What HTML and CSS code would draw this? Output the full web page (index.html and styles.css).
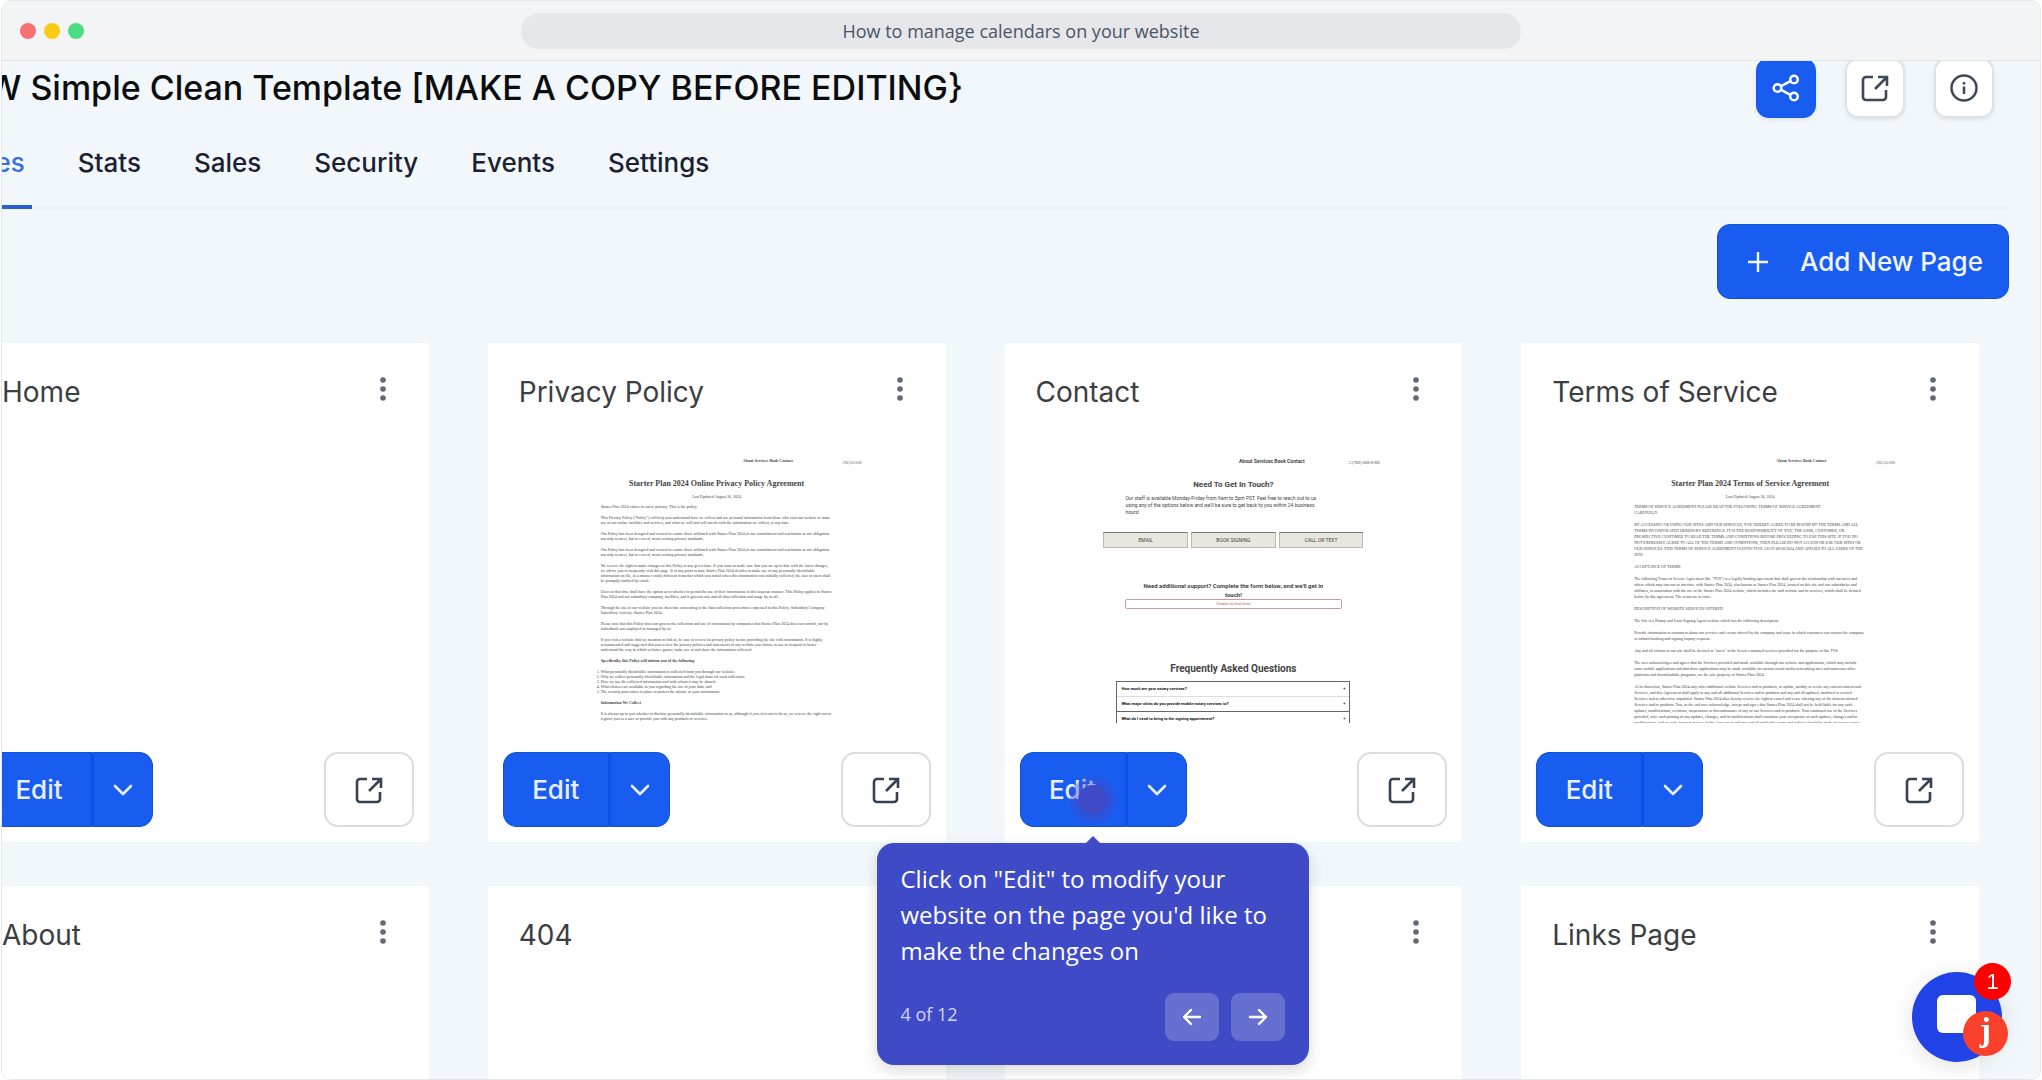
FILE: index.html
```
<!DOCTYPE html>
<html lang="en">
<head>
    <meta charset="UTF-8">
    <meta name="viewport" content="width=device-width, initial-scale=1.0">
    <title>How to manage calendars on your website</title>
    <link rel="stylesheet" href="styles.css">
</head>
<body>

    <!-- Shared icons -->
    <svg class="sprite" aria-hidden="true">
        <symbol id="icon-external" viewBox="0 0 28 28">
            <path d="M12 3H5a3 3 0 0 0-3 3v17a3 3 0 0 0 3 3h17a3 3 0 0 0 3-3v-7M17 3h9v9M25.500 3.500L14 15" fill="none" stroke="currentColor" stroke-width="2.600"/>
        </symbol>
        <symbol id="icon-chevron" viewBox="0 0 20 12">
            <path d="M2 2l8 8 8-8" fill="none" stroke="currentColor" stroke-width="2.600" stroke-linecap="round" stroke-linejoin="round"/>
        </symbol>
        <symbol id="icon-dots" viewBox="0 0 6 24">
            <circle cx="3" cy="3" r="2.800"/><circle cx="3" cy="12" r="2.800"/><circle cx="3" cy="21" r="2.800"/>
        </symbol>
    </svg>

    <div class="window">
        <div class="title-bar">
            <div class="lights">
                <span class="light red"></span>
                <span class="light yellow"></span>
                <span class="light green"></span>
            </div>
            <div class="address">How to manage calendars on your website</div>
        </div>

        <div class="viewport">
            <div class="workspace">
                <header class="site-header">
                    <h1>NEW Simple Clean Template [MAKE A COPY BEFORE EDITING}</h1>
                    <div class="actions">
                        <button class="icon-button primary" aria-label="Share">
                            <svg width="28" height="28" viewBox="0 0 28 28" fill="none" stroke="currentColor" stroke-width="2.500">
                                <circle cx="5.500" cy="14" r="3.800"/><circle cx="22" cy="5.500" r="3.800"/><circle cx="22" cy="22.500" r="3.800"/>
                                <path d="M9 12.200l9.500-5M9 15.800l9.500 5"/>
                            </svg>
                        </button>
                        <button class="icon-button" aria-label="Open site"><svg width="28" height="28"><use href="#icon-external"/></svg></button>
                        <button class="icon-button" aria-label="Info">
                            <svg width="28" height="28" viewBox="0 0 28 28" fill="none" stroke="currentColor" stroke-width="2.500">
                                <circle cx="14" cy="14" r="12.500"/>
                                <path d="M14 12.500v7.500M14 8v2.500"/>
                            </svg>
                        </button>
                    </div>
                </header>

                <nav class="tabs">
                    <a href="#" class="active">Pages</a>
                    <a href="#">Stats</a>
                    <a href="#">Sales</a>
                    <a href="#">Security</a>
                    <a href="#">Events</a>
                    <a href="#">Settings</a>
                </nav>

                <div class="toolbar">
                    <button class="add-button">
                        <svg width="20" height="20" viewBox="0 0 20 20"><path d="M10 0v20M0 10h20" stroke="currentColor" stroke-width="2.400"/></svg>
                        Add New Page
                    </button>
                </div>

                <div class="cards">
                    <section class="card">
                        <div class="card-head">
                            <h2>Home</h2>
                            <button class="dots" aria-label="More"><svg width="6" height="24"><use href="#icon-dots"/></svg></button>
                        </div>
                        <div class="thumb"></div>
                        <div class="card-foot">
                            <div class="split">
                                <button class="edit">Edit</button>
                                <button class="more" aria-label="Edit options"><svg width="20" height="12"><use href="#icon-chevron"/></svg></button>
                            </div>
                            <button class="open" aria-label="Open page"><svg width="28" height="28"><use href="#icon-external"/></svg></button>
                        </div>
                    </section>

                    <section class="card">
                        <div class="card-head">
                            <h2>Privacy Policy</h2>
                            <button class="dots" aria-label="More"><svg width="6" height="24"><use href="#icon-dots"/></svg></button>
                        </div>
                        <div class="thumb doc">
                            <div class="doc-nav"><b>About Services Book Contact</b><span>(702) 555-0100</span></div>
                            <h3>Starter Plan 2024 Online Privacy Policy Agreement</h3>
                            <p class="date">Last Updated August 30, 2024</p>
                            <div class="doc-body">
                                <p>Starter Plan 2024 values its users' privacy. This is the policy.</p>
                                <p>This Privacy Policy ("Policy") will help you understand how we collect and use personal information from those who visit our website or make use of our online facilities and services, and what we will and will not do with the information we collect, at any time.</p>
                                <p>Our Policy has been designed and created to ensure those affiliated with Starter Plan 2024 of our commitment and realization of our obligation not only to meet, but to exceed, most existing privacy standards.</p>
                                <p>Our Policy has been designed and created to ensure those affiliated with Starter Plan 2024 of our commitment and realization of our obligation not only to meet, but to exceed, most existing privacy standards.</p>
                                <p>We reserve the right to make changes to this Policy at any given time. If you want to make sure that you are up to date with the latest changes, we advise you to frequently visit this page. If at any point in time Starter Plan 2024 decides to make use of any personally identifiable information on file, in a manner vastly different from that which was stated when this information was initially collected, the user or users shall be promptly notified by email.</p>
                                <p>Users at that time shall have the option as to whether to permit the use of their information in this separate manner. This Policy applies to Starter Plan 2024 and our subsidiary company, facilities, and it governs any and all data collection and usage by us all.</p>
                                <p>Through the use of our website you are therefore consenting to the data collection procedures expressed in this Policy. Subsidiary Company Subsidiary Activity: Starter Plan 2024.</p>
                                <p>Please note that this Policy does not govern the collection and use of information by companies that Starter Plan 2024 does not control, nor by individuals not employed or managed by us.</p>
                                <p>If you visit a website that we mention or link to, be sure to review its privacy policy before providing the site with information. It is highly recommended and suggested that you review the privacy policies and statements of any website you choose to use or frequent to better understand the way in which websites garner, make use of and share the information collected.</p>
                                <p><b>Specifically, this Policy will inform you of the following</b></p>
                                <ol>
                                    <li>What personally identifiable information is collected from you through our website;</li>
                                    <li>Why we collect personally identifiable information and the legal basis for such collection;</li>
                                    <li>How we use the collected information and with whom it may be shared;</li>
                                    <li>What choices are available to you regarding the use of your data; and</li>
                                    <li>The security procedures in place to protect the misuse of your information.</li>
                                </ol>
                                <p><b>Information We Collect</b></p>
                                <p>It is always up to you whether to disclose personally identifiable information to us, although if you elect not to do so, we reserve the right not to register you as a user or provide you with any products or services.</p>
                            </div>
                        </div>
                        <div class="card-foot">
                            <div class="split">
                                <button class="edit">Edit</button>
                                <button class="more" aria-label="Edit options"><svg width="20" height="12"><use href="#icon-chevron"/></svg></button>
                            </div>
                            <button class="open" aria-label="Open page"><svg width="28" height="28"><use href="#icon-external"/></svg></button>
                        </div>
                    </section>

                    <section class="card">
                        <div class="card-head">
                            <h2>Contact</h2>
                            <button class="dots" aria-label="More"><svg width="6" height="24"><use href="#icon-dots"/></svg></button>
                        </div>
                        <div class="thumb contact">
                            <div class="doc-nav"><b>About Services Book Contact</b><span>&#9633; (702) 555-0100</span></div>
                            <h3>Need To Get In Touch?</h3>
                            <p class="intro">Our staff is available Monday-Friday from 9am to 5pm PST. Feel free to reach out to us<br>using any of the options below and we'll be sure to get back to you within 24 business<br>hours!</p>
                            <div class="options"><span>EMAIL</span><span>BOOK SIGNING</span><span>CALL OR TEXT</span></div>
                            <h4>Need additional support? Complete the form below, and we'll get in<br>touch!</h4>
                            <div class="form-error">Unable to find form</div>
                            <h5>Frequently Asked Questions</h5>
                            <div class="faq">
                                <div><b>How much are your notary services?</b><b>+</b></div>
                                <div><b>What major cities do you provide mobile notary services to?</b><b>+</b></div>
                                <div><b>What do I need to bring to the signing appointment?</b><b>+</b></div>
                            </div>
                        </div>
                        <div class="card-foot">
                            <div class="split">
                                <button class="edit">Edit</button>
                                <button class="more" aria-label="Edit options"><svg width="20" height="12"><use href="#icon-chevron"/></svg></button>
                                <span class="hotspot"></span>
                                <!-- Tour step -->
                                <div class="tour" role="dialog">
                                    <p>Click on "Edit" to modify your website on the page you'd like to make the changes on</p>
                                    <div class="tour-foot">
                                        <span class="step">4 of 12</span>
                                        <button aria-label="Previous"><svg width="20" height="18" viewBox="0 0 20 18"><path d="M18 9H2M9 2L2 9l7 7"/></svg></button>
                                        <button aria-label="Next"><svg width="20" height="18" viewBox="0 0 20 18"><path d="M2 9h16M11 2l7 7-7 7"/></svg></button>
                                    </div>
                                </div>
                            </div>
                            <button class="open" aria-label="Open page"><svg width="28" height="28"><use href="#icon-external"/></svg></button>
                        </div>
                    </section>

                    <section class="card">
                        <div class="card-head">
                            <h2>Terms of Service</h2>
                            <button class="dots" aria-label="More"><svg width="6" height="24"><use href="#icon-dots"/></svg></button>
                        </div>
                        <div class="thumb doc terms">
                            <div class="doc-nav"><b>About Services Book Contact</b><span>(702) 555-0100</span></div>
                            <h3>Starter Plan 2024 Terms of Service Agreement</h3>
                            <p class="date">Last Updated August 30, 2024</p>
                            <div class="doc-body">
                                <p>TERMS OF SERVICE AGREEMENT PLEASE READ THE FOLLOWING TERMS OF SERVICE AGREEMENT<br>CAREFULLY.</p>
                                <p>BY ACCESSING OR USING OUR SITES AND OUR SERVICES, YOU HEREBY AGREE TO BE BOUND BY THE TERMS AND ALL TERMS INCORPORATED HEREIN BY REFERENCE. IT IS THE RESPONSIBILITY OF YOU, THE USER, CUSTOMER, OR PROSPECTIVE CUSTOMER TO READ THE TERMS AND CONDITIONS BEFORE PROCEEDING TO USE THIS SITE. IF YOU DO NOT EXPRESSLY AGREE TO ALL OF THE TERMS AND CONDITIONS, THEN PLEASE DO NOT ACCESS OR USE OUR SITES OR OUR SERVICES. THIS TERMS OF SERVICE AGREEMENT IS EFFECTIVE AS OF 08/30/2024 AND APPLIES TO ALL USERS OF THE SITE.</p>
                                <p>ACCEPTANCE OF TERMS</p>
                                <p>The following Terms of Service Agreement (the "TOS") is a legally binding agreement that shall govern the relationship with our users and others which may interact or interface with Starter Plan 2024, also known as Starter Plan 2024, located on this site and our subsidiaries and affiliates, in association with the use of the Starter Plan 2024 website, which includes the said website and its services, which shall be defined below by this agreement. The terms are in force.</p>
                                <p>DESCRIPTION OF WEBSITE SERVICES OFFERED</p>
                                <p>The Site is a Notary and Loan Signing Agent website which has the following description:</p>
                                <p>Provide information to customers about our services and events offered by the company and ways in which customers can contact the company or submit booking and signing inquiry requests.</p>
                                <p>Any and all visitors to our site shall be deemed as "users" of the herein contained services provided for the purpose of this TOS.</p>
                                <p>The user acknowledges and agrees that the Services provided and made available through our website and applications, which may include some mobile applications and that those applications may be made available on various social media networking sites and numerous other platforms and downloadable programs, are the sole property of Starter Plan 2024.</p>
                                <p>At its discretion, Starter Plan 2024 may offer additional website Services and/or products, or update, modify or revise any current content and Services, and this Agreement shall apply to any and all additional Services and/or products and any and all updated, modified or revised Services unless otherwise stipulated. Starter Plan 2024 does hereby reserve the right to cancel and cease offering any of the aforementioned Services and/or products. You, as the end user acknowledge, accept and agree that Starter Plan 2024 shall not be held liable for any such updates, modifications, revisions, suspensions or discontinuance of any of our Services and/or products. Your continued use of the Services provided, after such posting of any updates, changes, and/or modifications shall constitute your acceptance of such updates, changes and/or modifications, and as such, frequent review of this Agreement and any and all applicable terms and policies should be made by you to ensure you are aware of all terms.</p>
                            </div>
                        </div>
                        <div class="card-foot">
                            <div class="split">
                                <button class="edit">Edit</button>
                                <button class="more" aria-label="Edit options"><svg width="20" height="12"><use href="#icon-chevron"/></svg></button>
                            </div>
                            <button class="open" aria-label="Open page"><svg width="28" height="28"><use href="#icon-external"/></svg></button>
                        </div>
                    </section>

                    <section class="card">
                        <div class="card-head">
                            <h2>About</h2>
                            <button class="dots" aria-label="More"><svg width="6" height="24"><use href="#icon-dots"/></svg></button>
                        </div>
                    </section>
                    <section class="card">
                        <div class="card-head">
                            <h2>404</h2>
                            <button class="dots" aria-label="More"><svg width="6" height="24"><use href="#icon-dots"/></svg></button>
                        </div>
                    </section>
                    <section class="card">
                        <div class="card-head">
                            <h2></h2>
                            <button class="dots" aria-label="More"><svg width="6" height="24"><use href="#icon-dots"/></svg></button>
                        </div>
                    </section>
                    <section class="card">
                        <div class="card-head">
                            <h2>Links Page</h2>
                            <button class="dots" aria-label="More"><svg width="6" height="24"><use href="#icon-dots"/></svg></button>
                        </div>
                    </section>
                </div>
            </div>
        </div>
    </div>

    <!-- Chat launcher -->
    <button class="chat" aria-label="Open chat">
        <span class="chat-square"></span>
        <span class="chat-count">1</span>
        <span class="chat-logo">j</span>
    </button>

</body>
</html>
```

FILE: styles.css
```
* {
    box-sizing: border-box;
}

body {
    margin: 0;
    background-color: #fff;
    font-family: Inter, "Liberation Sans", sans-serif;
    overflow: hidden;
}

h1, h2, h3, h4, h5, p, ol {
    margin: 0;
    padding: 0;
}

button {
    font-family: inherit;
    border: none;
    padding: 0;
    cursor: pointer;
}

svg {
    display: block;
}

.sprite {
    position: absolute;
    width: 0;
    height: 0;
}

/* Browser window */
.window {
    display: flex;
    flex-direction: column;
    height: 100vh;
    margin: 0 1px;
    border: 1px solid #e5e7eb;
    border-radius: 10px;
    overflow: hidden;
}

.title-bar {
    display: grid;
    grid-template-columns: 1fr 1000px 1fr;
    align-items: center;
    flex: none;
    height: 60px;
    padding: 0 18px;
    background-color: #f3f4f6;
    border-bottom: 1px solid #e2e4e8;
}

.lights {
    display: flex;
    gap: 8px;
}

.light {
    width: 16px;
    height: 16px;
    border-radius: 50%;
}

.red { background-color: #f87171; }
.yellow { background-color: #facc15; }
.green { background-color: #4ade80; }

.address {
    height: 36px;
    line-height: 36px;
    border-radius: 18px;
    background-color: #e5e7eb;
    color: #4b5563;
    font-family: "Open Sans", "Noto Sans", sans-serif;
    font-size: 18px;
    text-align: center;
}

.viewport {
    flex: 1;
    overflow: hidden;
    background-color: #f1f7fa;
}

/* The page is scrolled a little to the right and down */
.workspace {
    margin: -3px 0 0 -61px;
    padding-right: 31px;
}

.site-header {
    display: flex;
    justify-content: space-between;
    align-items: center;
    height: 60px;
    padding-right: 15px;
}

h1 {
    color: #0c0d10;
    font-size: 34px;
    font-weight: 500;
    line-height: 40px;
    white-space: nowrap;
}

.actions {
    display: flex;
    gap: 29px;
}

.icon-button {
    display: flex;
    align-items: center;
    justify-content: center;
    width: 60px;
    height: 60px;
    border: 2px solid #dfe2e6;
    border-radius: 13px;
    background-color: #fff;
    color: #3f4856;
    box-shadow: 0 2px 4px rgba(0, 0, 0, 0.08);
}

.icon-button.primary {
    border-color: #175aee;
    background-color: #195cf0;
    color: #fff;
}

.tabs {
    display: flex;
    gap: 39px;
    border-bottom: 2px solid #edf1f5;
}

.tabs a {
    margin-bottom: -2px;
    padding: 29px 7px 26px;
    border-bottom: 4px solid transparent;
    color: #1b2133;
    font-size: 26px;
    font-weight: 500;
    line-height: 32px;
    text-decoration: none;
}

.tabs a.active {
    border-color: #2860cc;
    color: #3b70d8;
}

.toolbar {
    display: flex;
    justify-content: flex-end;
    padding: 15px 0 44px;
}

.add-button {
    display: flex;
    align-items: center;
    gap: 32px;
    height: 75px;
    padding: 0 25px 0 30px;
    border: 1px solid #1050d4;
    border-radius: 13px;
    background-color: #195cf0;
    color: #f2f6ff;
    font-size: 26px;
    font-weight: 500;
}

/* Page cards */
.cards {
    display: grid;
    grid-template-columns: repeat(4, 1fr);
    gap: 44px 59px;
    padding: 0 30px;
}

.card {
    min-width: 0;
    min-height: 499px;
    padding: 0 15px 15px;
    background-color: #fff;
}

.card-head {
    display: flex;
    justify-content: space-between;
    align-items: flex-start;
    height: 112px;
    padding: 31px 28px 0 16px;
}

h2 {
    color: #3b3e42;
    font-size: 28px;
    font-weight: 400;
    line-height: 36px;
}

.dots {
    padding: 3px 0;
    background: none;
    fill: #616a74;
}

.thumb {
    height: 268px;
    overflow: hidden;
}

.card-foot {
    display: flex;
    justify-content: space-between;
    margin-top: 29px;
}

.split {
    position: relative;
    display: flex;
    height: 75px;
}

.edit {
    width: 108px;
    border: 1px solid #1050d4;
    border-right: 3px solid #0c50e6;
    border-radius: 14px 0 0 14px;
    background-color: #195cf0;
    color: #e8f0ff;
    font-size: 26px;
    font-weight: 500;
}

.more {
    display: flex;
    align-items: center;
    justify-content: center;
    width: 59px;
    border: 1px solid #1050d4;
    border-left: none;
    border-radius: 0 14px 14px 0;
    background-color: #195cf0;
    color: #e8f0ff;
}

.open {
    display: flex;
    align-items: center;
    justify-content: center;
    width: 90px;
    height: 75px;
    border: 2px solid #dadce0;
    border-radius: 14px;
    background-color: #fff;
    color: #374151;
}

/* Page previews */
.doc,
.contact {
    width: 300px;
    margin: 0 auto;
    color: #444;
}

.doc {
    font-family: "Liberation Serif", serif;
}

.contact {
    font-family: Roboto, sans-serif;
}

.doc-nav {
    display: flex;
    justify-content: flex-end;
    gap: 50px;
    height: 24px;
    padding: 3px 5px 0 0;
    font-size: 4px;
    line-height: 6px;
}

.doc-nav span {
    padding-top: 2px;
    font-size: 3px;
}

.doc h3 {
    font-size: 8px;
    line-height: 10px;
    text-align: center;
}

.date {
    padding: 5px 0;
    font-size: 4px;
    line-height: 5px;
    text-align: center;
}

.doc-body {
    width: 232px;
    margin: 0 auto;
    font-size: 4px;
    line-height: 5px;
}

.doc-body p,
.doc-body ol {
    margin-bottom: 6px;
}

.terms .doc-body {
    line-height: 6px;
}

.contact .doc-nav {
    gap: 44px;
    padding-right: 4px;
    font-size: 5px;
}

.contact .doc-nav span {
    font-size: 4px;
}

.contact h3 {
    font-size: 8px;
    line-height: 11px;
    text-align: center;
}

.intro {
    padding: 5px 0 16px 42px;
    font-size: 5px;
    line-height: 7px;
    white-space: nowrap;
}

.options {
    display: grid;
    grid-template-columns: repeat(3, 1fr);
    gap: 3px;
    width: 260px;
    margin: 0 auto 33px;
}

.options span {
    height: 16px;
    border: 1px solid #bbb8b2;
    border-top-color: #77756f;
    background-color: #e9e5df;
    font-size: 5px;
    line-height: 14px;
    text-align: center;
}

.contact h4 {
    font-size: 6px;
    line-height: 9px;
    text-align: center;
    white-space: nowrap;
}

.form-error {
    width: 217px;
    height: 10px;
    margin: 0 auto 54px;
    border: 1px solid #d09a9a;
    border-radius: 2px;
    color: #c05a5a;
    font-size: 4px;
    line-height: 8px;
    text-align: center;
}

.contact h5 {
    margin-bottom: 6px;
    font-size: 10px;
    line-height: 12px;
    text-align: center;
}

.faq {
    width: 234px;
    margin: 0 auto;
    border: 1px solid #666;
    color: #111;
    font-size: 4px;
}

.faq div {
    display: flex;
    justify-content: space-between;
    height: 15px;
    padding: 0 4px;
    border-bottom: 1px solid #ddd;
    line-height: 14px;
}

.faq div:nth-child(2) {
    border-color: #666;
}

/* Guided tour */
.hotspot {
    position: absolute;
    top: 33px;
    left: 58px;
    width: 30px;
    height: 30px;
    border-radius: 50%;
    background-color: #404bc8;
    box-shadow: 0 0 0 8px rgba(64, 75, 200, 0.4);
}

.tour {
    position: absolute;
    z-index: 10;
    top: 91px;
    left: -143px;
    width: 432px;
    padding: 18px 24px 24px;
    border-radius: 17px;
    background-color: #3f4bc6;
    color: #fff;
    font-family: "Open Sans", "Noto Sans", sans-serif;
    box-shadow: 0 6px 16px rgba(0, 0, 0, 0.14);
}

.tour::before {
    content: "";
    position: absolute;
    top: -7px;
    left: 209px;
    border: 7px solid transparent;
    border-top: none;
    border-bottom-color: #3f4bc6;
}

.tour p {
    font-size: 24px;
    line-height: 36px;
}

.tour-foot {
    display: flex;
    align-items: flex-start;
    gap: 12px;
    margin-top: 24px;
}

.step {
    flex: 1;
    color: #d0d3f2;
    font-size: 18px;
    line-height: 42px;
}

.tour button {
    display: flex;
    align-items: center;
    justify-content: center;
    width: 54px;
    height: 48px;
    border-radius: 9px;
    background-color: #6570d1;
}

.tour path {
    fill: none;
    stroke: #fff;
    stroke-width: 2.4px;
    stroke-linecap: round;
    stroke-linejoin: round;
}

/* Chat launcher */
.chat {
    position: fixed;
    right: 40px;
    bottom: 18px;
    width: 90px;
    height: 90px;
    border-radius: 50%;
    background-color: #2142e6;
    box-shadow: 0 4px 24px rgba(0, 0, 0, 0.12);
    color: #fff;
}

.chat-square {
    position: absolute;
    top: 23px;
    left: 25px;
    width: 39px;
    height: 38px;
    border-radius: 6px;
    background-color: #fff;
}

.chat-count {
    position: absolute;
    top: -9px;
    right: -9px;
    width: 37px;
    height: 37px;
    border-radius: 50%;
    background-color: #fe0000;
    font-family: "Liberation Sans", sans-serif;
    font-size: 22px;
    line-height: 37px;
}

.chat-logo {
    position: absolute;
    right: -6px;
    bottom: 6px;
    width: 45px;
    height: 45px;
    border-radius: 50%;
    background-color: #f9402b;
    font-family: "Liberation Serif", serif;
    font-size: 34px;
    font-weight: 700;
    line-height: 38px;
}
```
